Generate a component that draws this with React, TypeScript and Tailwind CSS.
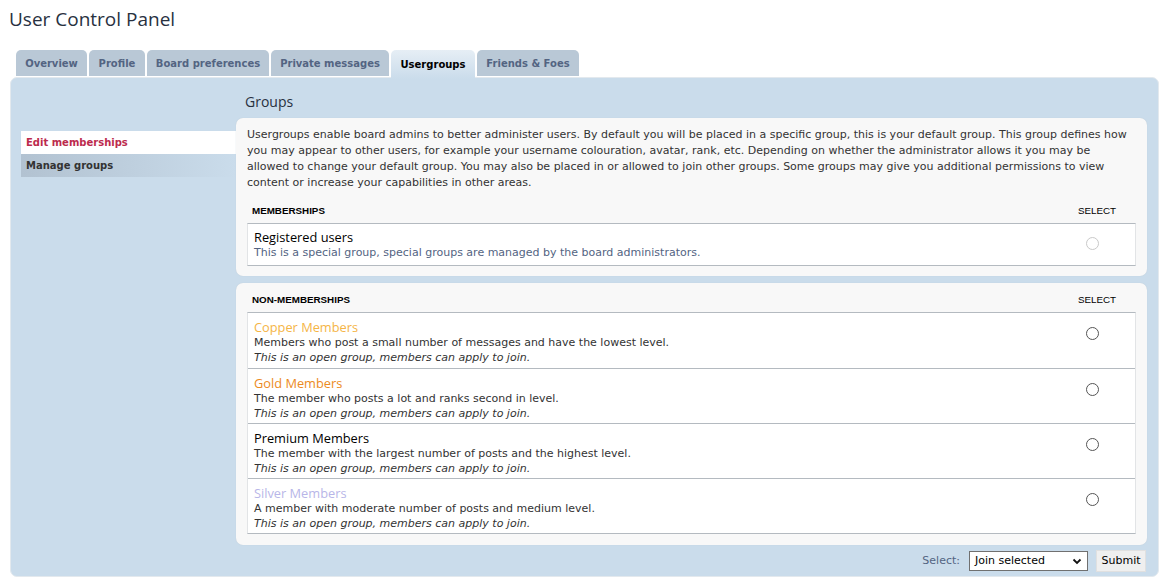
const verdana = "font-['DejaVu_Sans',Verdana,sans-serif]";
const trebuchet = "font-['Open_Sans','Liberation_Sans',sans-serif]";
const arial = "font-['Liberation_Sans',Arial,sans-serif]";

const tabs = [
  { label: "Overview", w: "w-[71px]" },
  { label: "Profile", w: "w-[56px]" },
  { label: "Board preferences", w: "w-[122px]" },
  { label: "Private messages", w: "w-[118px]" },
  { label: "Usergroups", w: "w-[84px]", active: true },
  { label: "Friends & Foes", w: "w-[102px]" },
];

const groups = [
  {
    name: "Copper Members",
    color: "text-[#f5b546]",
    desc: "Members who post a small number of messages and have the lowest level.",
  },
  {
    name: "Gold Members",
    color: "text-[#ec8a22]",
    desc: "The member who posts a lot and ranks second in level.",
  },
  {
    name: "Premium Members",
    color: "text-black",
    desc: "The member with the largest number of posts and the highest level.",
  },
  {
    name: "Silver Members",
    color: "text-[#b8b6e8]",
    desc: "A member with moderate number of posts and medium level.",
  },
];

function Radio({ disabled }: { disabled?: boolean }) {
  return (
    <span
      className={`block w-[13px] h-[13px] rounded-full border bg-white ${
        disabled ? "border-[#c9c9c9]" : "border-[#555]"
      }`}
    />
  );
}

function TableHead({ title }: { title: string }) {
  return (
    <div className={`flex items-center h-[24px] pl-[5px] pr-[20px] text-[9.8px] ${arial}`}>
      <span className="flex-1 font-bold text-black">{title}</span>
      <span className="text-black">SELECT</span>
    </div>
  );
}

export default function App() {
  return (
    <div className={`w-[1173px] h-[581px] bg-white overflow-hidden ${verdana}`}>
      <h2 className={`pl-[9px] pt-[5px] h-[50px] text-[19px] text-[#28313f] ${trebuchet}`}>
        User Control Panel
      </h2>

      {/* Tabs */}
      <div className="flex gap-[2px] ml-[16px] h-[27px]">
        {tabs.map((t) => (
          <div
            key={t.label}
            className={`${t.w} flex items-center justify-center rounded-t-[5px] text-[10px] font-bold ${
              t.active
                ? "bg-gradient-to-b from-[#e6eef5] to-[#cadceb] text-black h-[29px] relative z-10"
                : "bg-[#b9c8d6] text-[#536482] h-[26px]"
            }`}
          >
            {t.label}
          </div>
        ))}
      </div>

      {/* Panel */}
      <div className="ml-[10px] w-[1149px] h-[500px] bg-[#cadceb] rounded-[7px] border border-[#e3e9ee] pt-[13px] pl-[10px] pr-[11px]">
        <div className="flex">
          {/* Left nav */}
          <div className="w-[215px] pt-[40px]">
            <div className="h-[23px] flex items-center pl-[5px] bg-white text-[10px] font-bold text-[#bc2a4d]">
              Edit memberships
            </div>
            <div className="h-[23px] flex items-center pl-[5px] bg-gradient-to-r from-[#b2c2d1] to-[#cadceb] text-[10px] font-bold text-[#333]">
              Manage groups
            </div>
          </div>

          {/* Content */}
          <div className="flex-1">
            <h3 className={`pl-[9px] h-[27px] text-[14px] text-[#28313f] ${trebuchet}`}>Groups</h3>

            <div className="bg-[#f8f8f8] rounded-[7px] px-[11px] pt-[9px] pb-[10px] shadow-[0_0_1px_#b8c5d0]">
              <p className="text-[11px] leading-[16px] text-[#333]">
                Usergroups enable board admins to better administer users. By default you will be placed in a specific group, this is your default group. This group defines how you may appear to other users, for example your username colouration, avatar, rank, etc. Depending on whether the administrator allows it you may be allowed to change your default group. You may also be placed in or allowed to join other groups. Some groups may give you additional permissions to view content or increase your capabilities in other areas.
              </p>
              <div className="mt-[8px]">
                <TableHead title="MEMBERSHIPS" />
                <div className="h-[43px] bg-white border border-[#e2e4e6] border-t-[#b4bac0] border-b-[#b4bac0] pl-[6px] pr-[36px] pt-[6px] flex">
                  <div className="flex-1">
                    <div className={`text-[12.8px] leading-[15px] text-black ${trebuchet}`}>Registered users</div>
                    <div className="text-[11px] leading-[15px] text-[#536482]">
                      This is a special group, special groups are managed by the board administrators.
                    </div>
                  </div>
                  <div className="pt-[7px]">
                    <Radio disabled />
                  </div>
                </div>
              </div>
            </div>

            <div className="mt-[7px] bg-[#f8f8f8] rounded-[7px] px-[11px] pt-[5px] pb-[11px] shadow-[0_0_1px_#b8c5d0]">
              <TableHead title="NON-MEMBERSHIPS" />
              <div className="bg-white border border-[#e2e4e6] border-t-[#b4bac0] border-b-[#b4bac0]">
                {groups.map((g, i) => (
                  <div
                    key={g.name}
                    className={`h-[55px] flex pl-[6px] pr-[36px] pt-[7px] ${
                      i > 0 ? "border-t border-[#b4bac0]" : ""
                    }`}
                  >
                    <div className="flex-1">
                      <div className={`text-[12.8px] leading-[15px] ${g.color} ${trebuchet}`}>{g.name}</div>
                      <div className="text-[11px] leading-[15px] text-[#333]">{g.desc}</div>
                      <div className="text-[11px] leading-[15px] italic text-[#333]">
                        This is an open group, members can apply to join.
                      </div>
                    </div>
                    <div className="pt-[7px]">
                      <Radio />
                    </div>
                  </div>
                ))}
              </div>
            </div>

            <div className="flex items-center justify-end gap-[8px] mt-[5px] pr-[1px]">
              <span className="text-[11px] text-[#536482] mr-[1px]">Select:</span>
              <div className="w-[119px] h-[20px] border border-[#707070] bg-white flex items-center justify-between pl-[5px] pr-[5px] text-[11px] text-black">
                <span>Join selected</span>
                <svg width="10" height="10" viewBox="0 0 10 10">
                  <path d="M1.5 3.5 L5 7 L8.5 3.5" fill="none" stroke="#111" strokeWidth="1.8" />
                </svg>
              </div>
              <div className="w-[50px] h-[22px] bg-[#efefef] border border-[#e0e0e0] flex items-center justify-center text-[11px] text-black">
                Submit
              </div>
            </div>
          </div>
        </div>
      </div>
    </div>
  );
}
